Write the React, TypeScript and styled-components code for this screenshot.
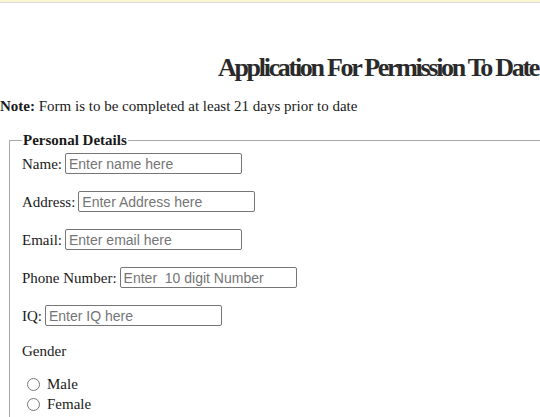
import styled, { createGlobalStyle } from 'styled-components';

const GlobalStyle = createGlobalStyle`
  html, body {
    margin: 0;
    padding: 0;
    overflow: hidden;
    background: #fff;
  }
  body {
    font-family: 'Liberation Serif', 'Times New Roman', serif;
    font-size: 15px;
    color: #1a1a1a;
  }
`;

const TopStrip = styled.div`
  height: 2px;
  background: #fbf7d6;
  border-bottom: 1px solid #dcdcd4;
`;

const Page = styled.div`
  width: 756px;
`;

const Title = styled.h2`
  margin: 49px 0 0;
  text-align: center;
  font-size: 26px;
  line-height: 31px;
  font-weight: 700;
  letter-spacing: -2.3px;
  color: #2a2a2a;
`;

const Note = styled.p`
  margin: 15px 0 17px;
  b {
    font-weight: 700;
  }
`;

const Fieldset = styled.fieldset`
  margin: 0 0 0 9px;
  padding: 4px 11px 10px 12px;
  border: 1px solid #a8a8a8;
  border-right: none;
  legend {
    padding: 0 1px;
    margin-left: 0;
    font-weight: 700;
  }
`;

const Row = styled.div`
  display: flex;
  align-items: baseline;
  gap: 3px;
  height: 21px;
  margin-bottom: 17px;
`;

const Label = styled.label`
  white-space: nowrap;
`;

const Input = styled.input`
  box-sizing: border-box;
  width: 177px;
  height: 21px;
  padding: 1px 3px;
  border: 1px solid #767676;
  border-radius: 2px;
  font-family: 'Liberation Sans', Arial, sans-serif;
  font-size: 14px;
  color: #111;
  &::placeholder {
    color: #757575;
  }
`;

const Plain = styled.div`
  margin: 2px 0 14px;
`;

const RadioRow = styled.label`
  display: flex;
  align-items: center;
  height: 20px;
  input {
    margin: 0 7px 0 5px;
    width: 13px;
    height: 13px;
  }
`;

const fields = [
  { label: 'Name:', ph: 'Enter name here' },
  { label: 'Address:', ph: 'Enter Address here' },
  { label: 'Email:', ph: 'Enter email here' },
  { label: 'Phone Number:', ph: 'Enter  10 digit Number' },
  { label: 'IQ:', ph: 'Enter IQ here' },
];

export default function App() {
  return (
    <>
      <GlobalStyle />
      <TopStrip />
      <Page>
        <Title>Application For Permission To Date</Title>
        <Note>
          <b>Note:</b> Form is to be completed at least 21 days prior to date
        </Note>
        <Fieldset>
          <legend>Personal Details</legend>
          {fields.map((f) => (
            <Row key={f.label}>
              <Label>{f.label}</Label>
              <Input type='text' placeholder={f.ph} />
            </Row>
          ))}
          <Plain>Gender</Plain>
          <RadioRow>
            <input type='radio' name='gender' />
            Male
          </RadioRow>
          <RadioRow>
            <input type='radio' name='gender' />
            Female
          </RadioRow>
        </Fieldset>
      </Page>
    </>
  );
}
